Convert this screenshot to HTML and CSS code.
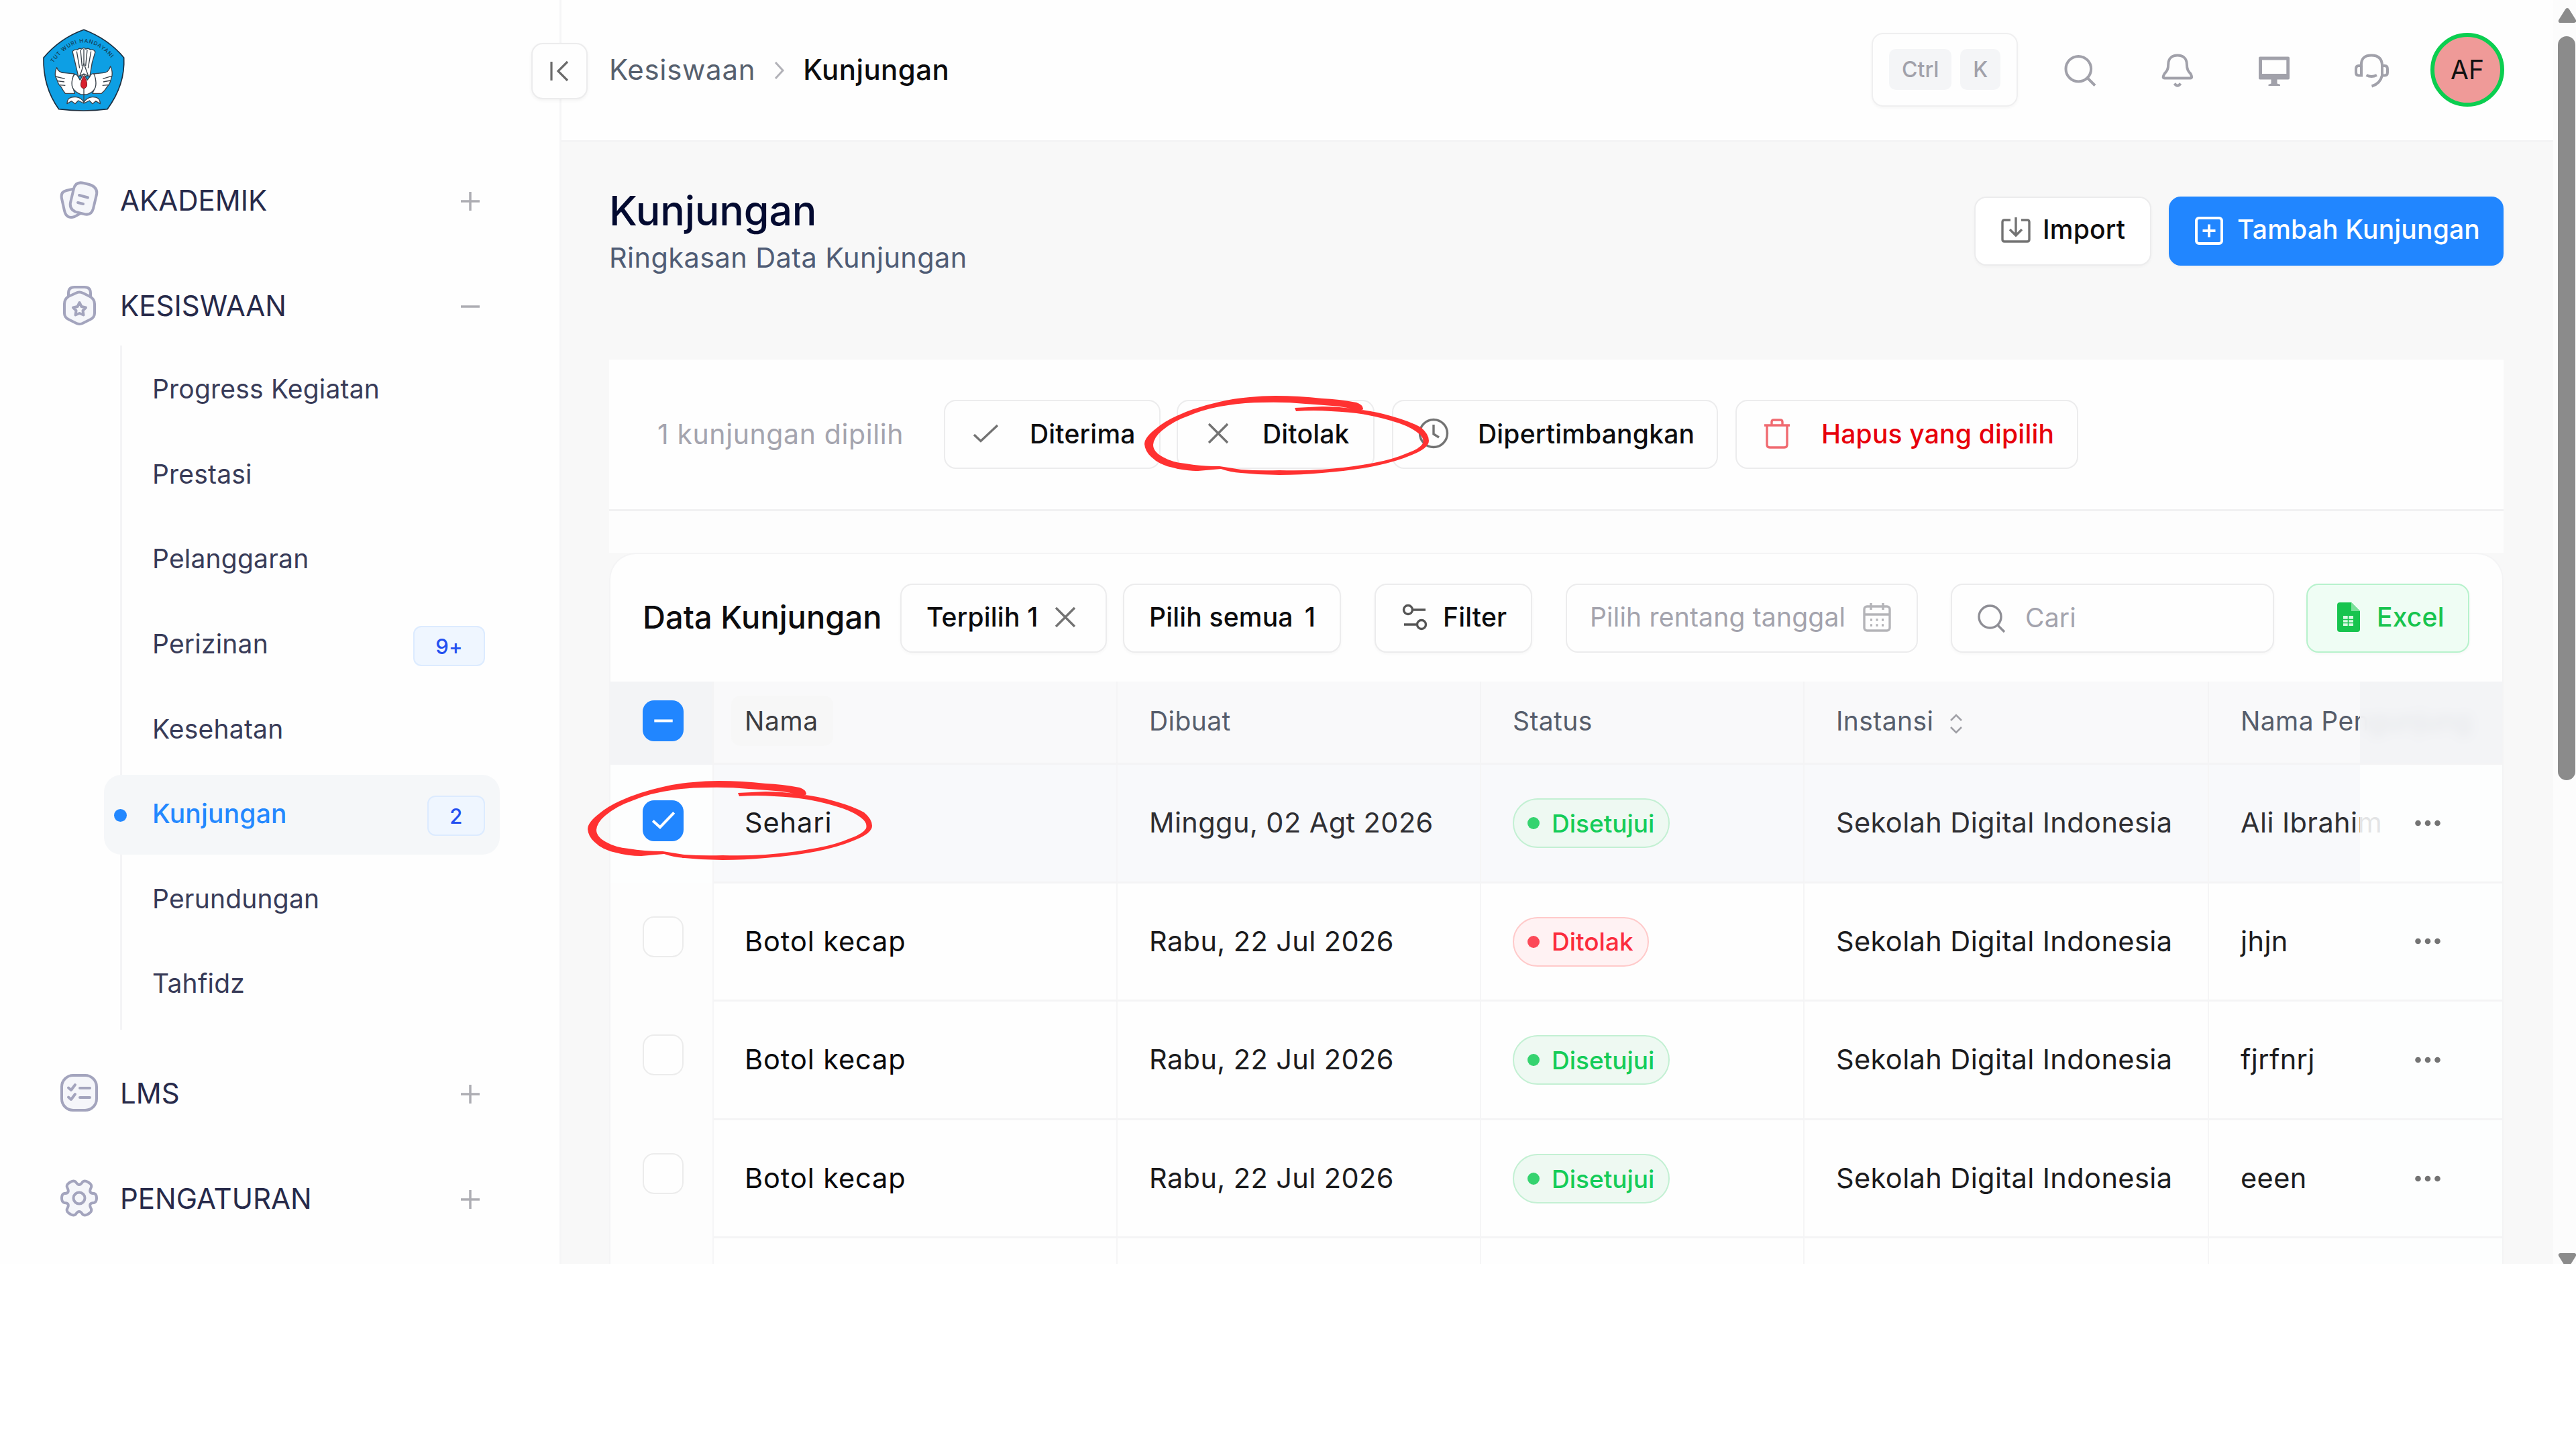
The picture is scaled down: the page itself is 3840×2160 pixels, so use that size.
FILE: index.html
```html
<!DOCTYPE html>
<html lang="id">
<head>
<meta charset="utf-8">
<title>Kunjungan</title>
<link rel="stylesheet" href="styles.css">
</head>
<body>
<svg width="0" height="0" class="defs">
  <symbol id="plus" viewBox="0 0 30 30"><path d="M15 1V29M1 15H29"/></symbol>
  <symbol id="minus" viewBox="0 0 30 30"><path d="M1 15H29"/></symbol>
  <symbol id="search" viewBox="0 0 50 50"><circle cx="23.5" cy="23.5" r="16.5"/><path d="M35 36L45 46"/></symbol>
  <symbol id="cross" viewBox="0 0 50 50"><path d="M11 11L39 39M39 11L11 39"/></symbol>
  <symbol id="dots" viewBox="0 0 38 10"><circle cx="4.5" cy="5" r="4.3"/><circle cx="19" cy="5" r="4.3"/><circle cx="33.5" cy="5" r="4.3"/></symbol>
  <symbol id="scribble" viewBox="0 0 425 120"><path d="M326 19Q325 13 316 10Q290 5 265 4Q230 0 195 0Q176 0 157 2Q132 4 112 9Q76 17 48 30Q30 38 17 49Q0 62 0 72Q1 83 10 91Q22 103 42 107Q60 112 80 112L114 109Q128 114 144 115Q172 118 201 118Q234 118 265 115Q306 112 342 105Q376 98 399 88Q424 78 424 67Q424 57 412 47Q396 38 367 30Q344 23 316 20Q290 16 265 16L224 18L226 23Q252 21 278 23Q305 24 329 28Q356 33 380 41Q400 48 411 58Q417 64 415 71Q410 79 393 85Q370 95 342 100Q306 107 265 110Q234 112 201 111Q172 112 144 110L112 105Q84 105 61 101Q41 99 29 92Q13 84 13 73Q14 62 26 52Q42 38 68 29Q94 18 125 14Q150 10 176 10Q210 9 240 12Q270 14 291 16L320 21Q326 22 326 19Z"/></symbol>
</svg>

<div class="app">
  <aside class="sidebar">
    <svg class="logo" viewBox="0 0 450 450">
      <path d="M225 43Q335 85 404 168Q410 290 330 398Q225 412 113 398Q42 300 45 168Q120 80 225 43Z" fill="#0d9fe4" stroke="#1c2f40" stroke-width="5"/>
      <path id="motto" d="M88 192Q225 8 368 194" fill="none" stroke="none"/>
      <text class="motto"><textPath href="#motto" textLength="315">TUT WURI HANDAYANI</textPath></text>
      <g fill="#fff" stroke="#39424b" stroke-width="4" stroke-linejoin="round">
        <path d="M174 140Q184 128 196 133Q205 122 215 130Q225 118 234 130Q245 122 254 133Q268 128 276 142L262 190L252 250H200L186 190Z"/>
        <path d="M193 140L206 215M210 133L217 205M225 128V195M240 133L233 205M257 140L244 215" fill="none"/>
        <path d="M104 212Q112 236 140 236L182 240Q168 270 176 300L184 328H142L132 314L124 300L112 286L106 270L98 252Q94 232 104 212Z"/>
        <path d="M344 206Q336 236 310 236L268 240Q282 270 274 300L264 328H304L318 314L328 300L340 284L346 266L351 248Q354 228 344 206Z"/>
        <path d="M178 250Q160 300 190 320Q212 336 225 332Q240 336 262 320Q290 300 272 244Q262 232 252 252L240 268L225 240L208 268L196 248Q186 238 178 250Z"/>
        <path d="M150 374Q150 340 190 344Q214 346 225 368Q238 346 262 344Q298 342 298 374L278 362L264 374L250 360L225 372L200 360L186 374L170 362Z"/>
        <path d="M225 194L238 230L245 250L225 240L206 250L214 230Z"/>
        <path d="M98 252L140 262M106 272L138 276M114 290L142 292M350 250L310 262M344 270L312 276M334 290L308 292" fill="none"/>
      </g>
      <path d="M225 250Q242 275 238 295Q232 306 225 306Q216 306 212 295Q209 275 225 250Z" fill="#d8202d" stroke="#7a1a20" stroke-width="3"/>
      <path d="M225 306V368" stroke="#39424b" stroke-width="4"/>
    </svg>

    <nav class="menu">
      <div class="group">
        <svg class="group-icon" viewBox="0 0 60 60"><path d="M20 14L11 16Q2 18 4 28L8 46Q11 59 23 55L36 48"/><path d="M22 13Q25 2 37 5L45 7Q58 11 56 22L51 43Q48 54 37 51L29 49Q15 46 17 34Z"/><path d="M30 23L43 26.500M28 34L36 36"/></svg>
        <span>AKADEMIK</span><svg class="toggle"><use href="#plus"/></svg>
      </div>
      <div class="group">
        <svg class="group-icon" viewBox="0 0 60 60"><path d="M14 20V12Q14 3 23 3H38Q47 3 47 12V20"/><path d="M25 12Q30 9 36 12L46 17Q53 21 53 28V42Q53 48 47 51L35 57Q30 59 26 57L14 51Q8 48 8 42V28Q8 21 14 17Z"/><path d="M30.500 26L33.500 32L40 33.500L35.500 38L36.500 44.500L30.500 42L24.500 44.500L25.500 38L21 33.500L27.500 32Z"/></svg>
        <span>KESISWAAN</span><svg class="toggle"><use href="#minus"/></svg>
      </div>
      <ul class="submenu">
        <li>Progress Kegiatan</li>
        <li>Prestasi</li>
        <li>Pelanggaran</li>
        <li>Perizinan<b class="count">9+</b></li>
        <li>Kesehatan</li>
        <li class="active">Kunjungan<b class="count single">2</b></li>
        <li>Perundungan</li>
        <li>Tahfidz</li>
      </ul>
      <div class="group">
        <svg class="group-icon" viewBox="0 0 60 60"><rect x="4" y="4" width="52" height="52" rx="17"/><path d="M14 22.500L18 26L24 18M14 36.500L18 40L24 32M31 23H46M31 37H46"/></svg>
        <span>LMS</span><svg class="toggle"><use href="#plus"/></svg>
      </div>
      <div class="group">
        <svg class="group-icon" viewBox="0 0 60 60"><path d="M25 6Q30 14 35 6Q38 3 43 6L46 8Q50 11 47 16Q44 23 52 23Q56 24 56 30Q56 36 52 37Q44 37 47 44Q50 49 46 52L43 54Q38 57 35 54Q30 46 25 54Q22 57 17 54L14 52Q10 49 13 44Q16 37 8 37Q4 36 4 30Q4 24 8 23Q16 23 13 16Q10 11 14 8L17 6Q22 3 25 6Z"/><circle cx="30" cy="30" r="8.500"/></svg>
        <span>PENGATURAN</span><svg class="toggle"><use href="#plus"/></svg>
      </div>
    </nav>
  </aside>

  <main class="main">
    <header class="topbar">
      <div class="crumbs">
        <span>Kesiswaan</span>
        <svg class="crumb-sep" viewBox="0 0 16 28"><path d="M2 2L13 14L2 26"/></svg>
        <strong>Kunjungan</strong>
      </div>
      <div class="shortcut"><kbd>Ctrl</kbd><kbd>K</kbd></div>
      <div class="tools">
        <svg viewBox="0 0 60 60"><circle cx="27.300" cy="27.700" r="18.800"/><path d="M40.500 41L52 52.500"/></svg>
        <svg viewBox="0 0 60 60"><path d="M30 7.500C21 7.500 16.500 13 16.300 20C16.200 29 14 31 10.500 35Q6.500 41.500 11 41.500H49Q53 41.500 49.500 35C46 31 44 29 43.800 20C43.500 13 39 7.500 30 7.500Z"/><path d="M25.500 49.500Q30 56 34.500 49.500"/></svg>
        <svg viewBox="0 0 60 60"><path class="solid" fill-rule="evenodd" d="M9 9.500H51Q53 9.500 53 11.500V41.500Q53 43.500 51 43.500H34.500V49.500L39 51V53H21.500V51L25.500 49.500V43.500H9Q7 43.500 7 41.500V11.500Q7 9.500 9 9.500ZM12 14.500V35H48.300V14.500Z"/></svg>
        <svg viewBox="0 0 60 60"><path d="M15 23V37.500H11Q7 37.500 7 33V28Q7 23 11 23H15Q14 7.500 30 7.500Q46 7.500 46 23V37.500H49.500Q54 37.500 54 33V28Q54 23 49.500 23H46M46 37.500Q43 50 30.500 53.500M22.500 37Q30 41 38 37"/></svg>
      </div>
      <div class="avatar">AF</div>
    </header>

    <section class="content">
      <div class="page-head">
        <div class="page-titles">
          <h1>Kunjungan</h1>
          <p>Ringkasan Data Kunjungan</p>
        </div>
        <button class="btn import"><svg viewBox="0 0 50 50"><path d="M17 9H8Q5 9 5 12V38Q5 41 8 41H42Q45 41 45 38V12Q45 9 42 9H33M25 5V31M16 23L25 32L34 23"/></svg>Import</button>
        <button class="btn primary"><svg viewBox="0 0 50 50"><rect x="6" y="6" width="38" height="38" rx="4"/><path d="M25 15.500V34.500M15.500 25H34.500"/></svg>Tambah Kunjungan</button>
      </div>

      <div class="bulk">
        <div class="bulk-bar">
          <span class="bulk-info">1 kunjungan dipilih</span>
          <button class="btn accept"><svg viewBox="0 0 50 50"><path d="M8 27L18 36.500L43 13"/></svg>Diterima</button>
          <button class="btn reject"><svg><use href="#cross"/></svg>Ditolak</button>
          <button class="btn consider"><svg viewBox="0 0 50 50"><circle cx="25" cy="25" r="20.500"/><path d="M25 12V26L33 31"/></svg>Dipertimbangkan</button>
          <button class="btn delete"><svg viewBox="0 0 50 50"><path d="M6 13H44M17 12V8Q17 5 20 5H30Q33 5 33 8V12M10 14V42Q10 46 14 46H36Q40 46 40 42V14"/></svg>Hapus yang dipilih</button>
        </div>
      </div>

      <div class="card">
        <div class="toolbar">
          <h2>Data Kunjungan</h2>
          <button class="btn selected">Terpilih 1<svg><use href="#cross"/></svg></button>
          <button class="btn all">Pilih semua<span>1</span></button>
          <button class="btn filter"><svg viewBox="0 0 50 50"><circle cx="15" cy="14" r="6.500"/><path d="M23 14H41M9 36H27"/><circle cx="35" cy="36" r="6.500"/></svg>Filter</button>
          <div class="btn field range">Pilih rentang tanggal<svg viewBox="0 0 50 50"><rect x="6" y="9" width="38" height="36" rx="4"/><path d="M6 21H44M16 4V14M34 4V14"/><path class="days" d="M15 29H18M23.500 29H26.500M32 29H35M15 37H18M23.500 37H26.500M32 37H35"/></svg></div>
          <div class="btn field find"><svg><use href="#search"/></svg>Cari</div>
          <button class="btn excel"><svg viewBox="0 0 50 50"><path class="sheet" d="M12 3H29L42 16V43Q42 47 38 47H12Q8 47 8 43V7Q8 3 12 3Z"/><path class="fold" d="M29 3L42 16H29Z"/><path class="cells" d="M17 23H32V38H17Z"/><path class="grid-lines" d="M17 28.500H32M17 33.500H32M24.500 23V38"/></svg>Excel</button>
        </div>

        <div class="table">
          <div class="row head">
            <div class="pick"><i class="box on"><svg viewBox="0 0 60 60"><path d="M17 30H44"/></svg></i></div>
            <div><span class="hover">Nama</span></div>
            <div>Dibuat</div>
            <div>Status</div>
            <div>Instansi<svg class="sort" viewBox="0 0 20 30"><path d="M2 10L10 2L18 10M2 20L10 28L18 20"/></svg></div>
            <div>Nama Pengunjung</div>
            <div class="actions"></div>
          </div>
          <div class="row picked">
            <div class="pick"><i class="box on"><svg viewBox="0 0 60 60"><path d="M15 30L25.500 39.500L46 18"/></svg></i></div>
            <div class="name">Sehari</div><div>Minggu, 02 Agt 2026</div>
            <div><span class="status ok">Disetujui</span></div>
            <div>Sekolah Digital Indonesia</div><div>Ali Ibrahim</div>
            <div class="actions"><svg><use href="#dots"/></svg></div>
          </div>
          <div class="row">
            <div class="pick"><i class="box"></i></div>
            <div class="name">Botol kecap</div><div>Rabu, 22 Jul 2026</div>
            <div><span class="status no">Ditolak</span></div>
            <div>Sekolah Digital Indonesia</div><div>jhjn</div>
            <div class="actions"><svg><use href="#dots"/></svg></div>
          </div>
          <div class="row">
            <div class="pick"><i class="box"></i></div>
            <div class="name">Botol kecap</div><div>Rabu, 22 Jul 2026</div>
            <div><span class="status ok">Disetujui</span></div>
            <div>Sekolah Digital Indonesia</div><div>fjrfnrj</div>
            <div class="actions"><svg><use href="#dots"/></svg></div>
          </div>
          <div class="row">
            <div class="pick"><i class="box"></i></div>
            <div class="name">Botol kecap</div><div>Rabu, 22 Jul 2026</div>
            <div><span class="status ok">Disetujui</span></div>
            <div>Sekolah Digital Indonesia</div><div>eeen</div>
            <div class="actions"><svg><use href="#dots"/></svg></div>
          </div>
          <div class="row">
            <div class="pick"></div><div></div><div></div><div></div><div></div><div></div><div class="actions"></div>
          </div>
        </div>
      </div>
    </section>
  </main>

  <div class="scrollbar">
    <svg viewBox="0 0 28 22"><path d="M14 0Q16 0 17 2L27 18Q28 22 24 22H4Q0 22 1 18L11 2Q12 0 14 0Z"/></svg>
    <div class="thumb"></div>
    <svg class="down" viewBox="0 0 28 22"><path d="M14 22Q16 22 17 20L27 4Q28 0 24 0H4Q0 0 1 4L11 20Q12 22 14 22Z"/></svg>
  </div>

  <button class="collapse"><svg viewBox="0 0 40 40"><path d="M8 6V34M32 6L18 20L32 34"/></svg></button>
  <svg class="mark mark-reject"><use href="#scribble"/></svg>
  <svg class="mark mark-row"><use href="#scribble"/></svg>
</div>
</body>
</html>
```
FILE: styles.css
```css
* { box-sizing: border-box; margin: 0; padding: 0; }
body { background: #fff; font-family: "Inter", sans-serif; font-size: 39px; letter-spacing: .2px; color: #0c0c0e; white-space: nowrap; }
svg { fill: none; stroke: currentColor; stroke-width: 4; flex: none; display: block; }
button { font: inherit; letter-spacing: inherit; color: inherit; }
.defs { position: absolute; }
.app { position: relative; display: flex; width: 3840px; height: 1884px; overflow: hidden; }

/* sidebar */
.sidebar { width: 837px; flex: none; border-right: 3px solid #f5f5f6; background: #fefefe; }
.logo { width: 150px; height: 150px; margin: 30px 0 58px 50px; stroke: none; }
.motto { font-size: 24px; font-weight: 500; fill: #14394f; letter-spacing: 0; stroke: none; }
.group { display: flex; align-items: center; height: 120px; margin-bottom: 37px; padding: 0 118px 0 88px; font-size: 42px; letter-spacing: 0; color: #272a4a; }
.group:has(+ .submenu) { margin-bottom: 0; }
.group span { flex: 1; margin-left: 31px; }
.group-icon { width: 60px; height: 60px; color: #a3a4bd; stroke-width: 4; stroke-linejoin: round; stroke-linecap: round; }
.group-icon path:nth-child(-n+2), .group-icon rect { fill: #f5f6fa; }
.group-icon rect + path { fill: none; }
.toggle { width: 30px; height: 30px; color: #adadb3; stroke-width: 3.5; position: relative; top: 2px; }
.submenu { position: relative; list-style: none; display: flex; flex-direction: column; gap: 8px; height: 1020px; margin-bottom: 34px; padding: 7px 89px 0 155px; color: #383b58; }
.submenu::before { content: ""; position: absolute; left: 179px; top: 0; bottom: 0; width: 3px; background: #f4f4f6; }
.submenu li { position: relative; flex: 0 0 118.6px; display: flex; align-items: center; padding: 0 22px 3px 72px; border-radius: 26px; }
.submenu .active { background: #f5f7f9; color: #2388ff; font-weight: 500; }
.submenu .active::before { content: ""; position: absolute; left: 15px; top: 51px; width: 19px; height: 19px; border-radius: 50%; background: #2388ff; }
.count { margin-left: auto; width: 107px; height: 60px; border: 2px solid #dcebff; border-radius: 12px; background: #eff6ff; color: #2450f0; font-size: 31px; font-weight: 500; line-height: 57px; text-align: center; position: relative; top: 3px; }
.single { width: 86px; }

/* top bar */
.main { flex: 1; min-width: 0; background: #f8f8f8; }
.topbar { display: flex; align-items: center; height: 212px; padding: 0 73px 2px 71px; border-bottom: 3px solid #f4f4f5; background: #fefefe; }
.crumbs { display: flex; align-items: center; margin-right: auto; font-size: 42px; letter-spacing: .7px; color: #56606e; }
.crumbs strong { font-weight: 500; letter-spacing: .4px; color: #0c0c0e; }
.crumb-sep { width: 16px; height: 28px; margin: 2px 27px 0 28px; color: #b2b2b8; stroke-width: 3; }
.shortcut { display: flex; align-items: center; justify-content: center; gap: 13px; width: 218px; height: 110px; border: 2.5px solid #efeff0; border-radius: 17px; box-shadow: 0 2px 4px #0000000a; }
.shortcut kbd { height: 61px; padding: 0 19px; border-radius: 10px; background: #f4f5f7; color: #a1a1aa; font: 500 32px/61px "Inter", sans-serif; letter-spacing: 0; }
.tools { display: flex; gap: 84.6px; margin: 2px 58px 0 63px; color: #a1a1aa; }
.tools svg { width: 60px; height: 60px; }
.tools .solid { fill: #a1a1aa; stroke: none; }
.avatar { width: 110px; height: 110px; border: 6px solid #0bce50; border-radius: 50%; background: #ef9a98; color: #111; line-height: 98px; text-align: center; letter-spacing: 0; }

/* page head */
.content { width: 2824px; margin-left: 71px; }
.page-head { display: flex; height: 324px; padding-top: 65px; }
.page-titles { margin: 0 auto; margin-left: 0; }
.page-titles h1 { margin-bottom: 3px; font-size: 61px; line-height: 74px; font-weight: 500; letter-spacing: -.2px; color: #030a30; }
.page-titles p { font-size: 41.5px; line-height: 60px; letter-spacing: .4px; color: #4f5c75; }
.btn { display: flex; align-items: center; flex: none; height: 103px; padding: 0 35px; border: 2.5px solid #ececed; border-radius: 18px; background: #fff; box-shadow: 0 2px 4px #00000008; font-weight: 500; text-align: left; }
.btn svg { width: 50px; height: 50px; color: #737373; stroke-width: 3.4; }
.page-head .btn { margin-top: 16px; padding-bottom: 7px; }
.btn.import { width: 264px; margin-right: 26px; gap: 15px; }
.btn.import svg, .btn.primary svg { position: relative; top: 3px; }
.btn.primary { width: 499px; gap: 17px; padding-left: 33px; background: #2186ff; border-color: #2186ff; color: #fff; }
.btn.primary svg { color: #fff; stroke-width: 4; }

/* bulk actions */
.bulk { height: 288px; background: #fdfdfd; }
.bulk-bar { display: flex; align-items: center; height: 226px; padding: 0 0 1px 72px; border-bottom: 3px solid #f1f1f2; background: #fefefe; }
.bulk-info { width: 427px; font-size: 41px; letter-spacing: .6px; color: #a4a4ae; }
.bulk .btn { gap: 41px; padding-bottom: 2px; box-shadow: none; background: #fefefe; }
.btn.accept { width: 323px; margin-right: 24px; }
.btn.reject { width: 295px; margin-right: 26px; }
.btn.consider { width: 486px; margin-right: 26px; }
.btn.delete { width: 511px; color: #e7000b; }
.btn.delete svg { color: #f06a70; }

/* table card */
.card { width: 2824px; border: 2px solid #f4f4f5; border-bottom: 0; border-radius: 40px 40px 0 0; background: #fefefe; }
.toolbar { display: flex; align-items: center; height: 190px; padding: 0 49px 0 48px; }
.toolbar h2 { width: 384px; padding-bottom: 3px; font-size: 47px; font-weight: 500; letter-spacing: .05px; }
.toolbar .btn { padding-bottom: 4px; background: #fefefe; }
.toolbar .btn svg { position: relative; top: 1px; }
.toolbar .btn.selected { width: 308px; margin-right: 24px; padding-left: 37px; justify-content: space-between; }
.toolbar .btn.all { width: 325px; margin-right: 50px; padding-left: 37px; gap: 17px; }
.toolbar .btn.filter { width: 235px; margin-right: 50px; gap: 17px; padding-left: 33px; }
.btn.filter svg { color: #555; }
.field { font-weight: 400; color: #a3a3ad; }
.btn.field svg { color: #b4b4b8; }
.toolbar .btn.range { width: 525px; margin-right: 49px; padding: 0 34px 4px 34px; justify-content: space-between; box-shadow: none; font-weight: 400; }
.toolbar .btn.find { width: 482px; margin-right: auto; padding: 0 0 2px 33px; gap: 26px; font-weight: 400; }
.btn.find svg { color: #8e8e95; }
.btn.excel { width: 243px; gap: 17px; border-color: #b7f2cc; color: #17c44e; }
.toolbar .btn.excel { padding-left: 36px; background: #effdf4; }
.excel .sheet { fill: #17c44e; stroke: none; }
.excel .fold { fill: #7be09a; stroke: none; }
.excel .cells { fill: #d9f9e3; stroke: none; }
.excel .grid-lines { stroke: #17c44e; stroke-width: 1.6; }

.row { position: relative; display: grid; grid-template-columns: 154px 602px 542px 482px 603px 1fr; height: 176.6px; font-size: 41.5px; letter-spacing: .4px; color: #1b1b1d; }
.row > div { display: flex; align-items: center; min-width: 0; padding: 0 0 1px 47px; border-right: 2px solid #f5f5f6; border-bottom: 3px solid #f4f4f5; overflow: hidden; }
.row > div:nth-child(2) { padding-left: 46px; }
.row > .pick { padding: 0 0 17px 48px; border-bottom: 0; background: #fdfdfd; }
.row > div:nth-child(6) { border-right: 0; }
.row > .actions { position: absolute; right: 0; top: 0; bottom: 0; width: 212px; padding: 0 0 0 82px; border-right: 0; background: #fdfefee0; }
.actions svg { width: 38px; height: 10px; fill: #737373; stroke: none; }
.row .name { color: #09090b; letter-spacing: .9px; }
.row.picked .name { color: #1c1c20; }
.head { height: 124px; font-size: 39px; color: #565d6b; }
.row.head > div { background: #f9f9fa; padding-bottom: 4px; border-right-color: #f4f4f5; }
.row.head > .pick { background: #f3f4f6; padding-bottom: 7px; }
.row.head > .actions { background: #f2f3f5e8; backdrop-filter: blur(8px); }
.hover { margin-left: -20px; padding: 14px 22px 14px 20px; border-radius: 14px; background: #f7f7f7; color: #3c3c40; letter-spacing: .6px; }
.sort { width: 20px; height: 30px; margin: 8px 0 0 24px; color: #a0a0a6; stroke-width: 2.6; }
.picked > div { background: #f8f9fb; color: #2f2f33; }
.row.picked > .pick { background: #fdfefe; padding-bottom: 10px; }
.box { display: block; width: 61px; height: 61px; border: 2.5px solid #ececec; border-radius: 17px; background: #fefefe; }
.box.on { border: 0; background: #2186ff; color: #fff; }
.box svg { width: 61px; height: 61px; }
.status { display: flex; align-items: center; height: 74px; padding: 0 21px 0 20px; border: 2.5px solid; border-radius: 37px; font-size: 37px; font-weight: 500; letter-spacing: 0; position: relative; top: 1px; }
.status::before { content: ""; width: 18px; height: 18px; margin-right: 18px; border-radius: 50%; background: currentColor; opacity: .85; }
.ok { color: #14cc58; background: #eef9f2; border-color: #c3f0d3; }
.no { color: #fb2c3c; background: #fff2f3; border-color: #ffcaca; }

/* scrollbar */
.scrollbar { width: 34px; flex: none; display: flex; flex-direction: column; padding: 12px 0 0 7px; background: #fcfcfc; }
.scrollbar svg { width: 28px; height: 22px; fill: #8b8b8b; stroke: none; }
.thumb { width: 26px; height: 1109px; margin-top: 20px; border-radius: 13px; background: #8b8b8b; }
.scrollbar .down { margin-top: auto; margin-bottom: -6px; }

/* overlays */
.collapse { position: absolute; left: 792px; top: 64px; width: 84px; height: 84px; border: 2.5px solid #ececed; border-radius: 17px; background: #fefefe; box-shadow: 0 2px 5px #0000000d; display: grid; place-items: center; }
.collapse svg { width: 40px; height: 40px; color: #6b6b6b; stroke-width: 3.2; }
.mark { position: absolute; width: 425px; height: 120px; fill: #ff3131; stroke: none; }
.mark-reject { left: 1706px; top: 590px; }
.mark-row { left: 876px; top: 1164px; }
```
